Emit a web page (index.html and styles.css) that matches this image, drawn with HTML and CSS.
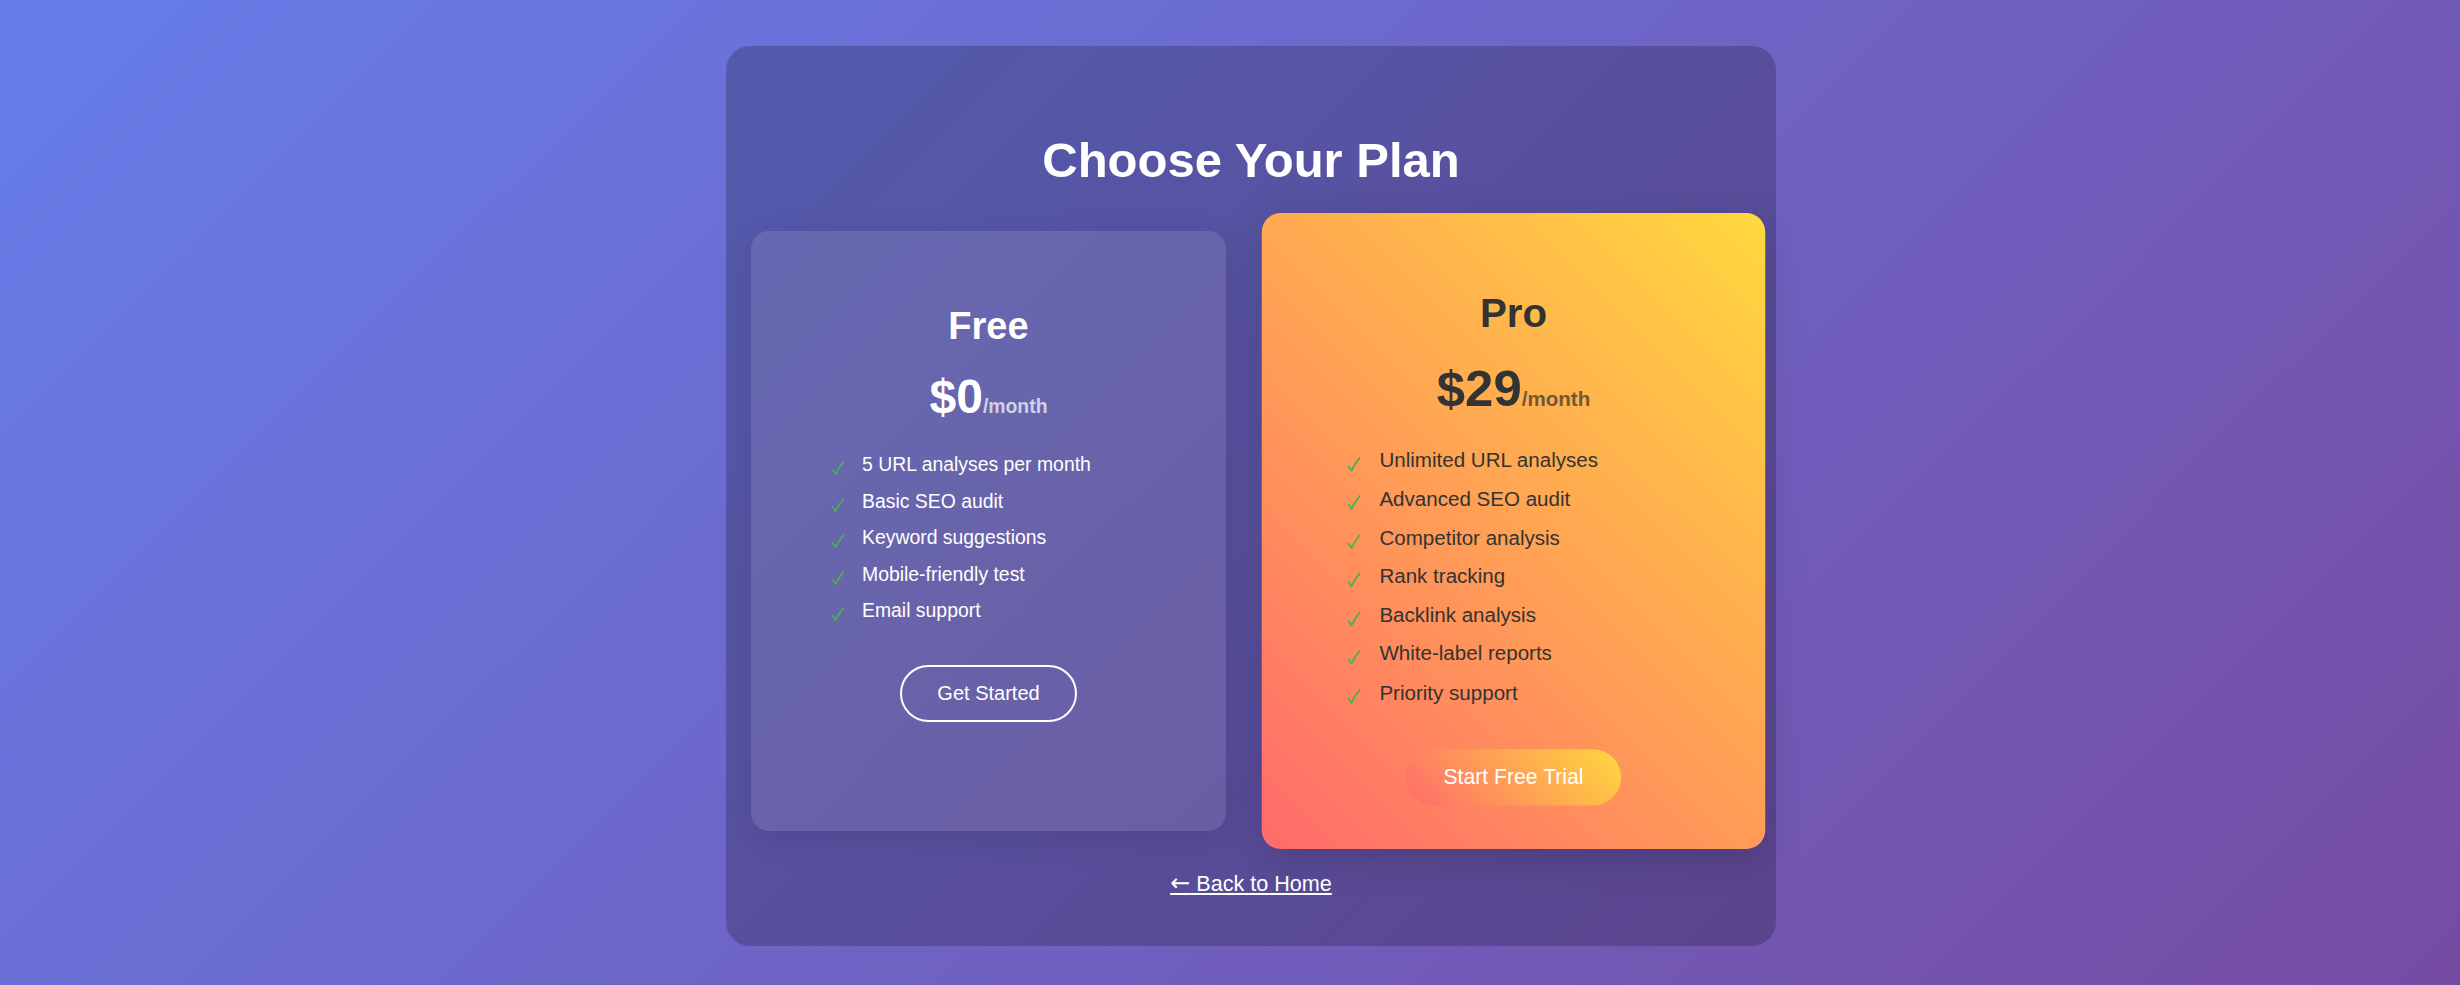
FILE: index.html
```html
<!DOCTYPE html>
<html lang="en">
<head>
<meta charset="utf-8">
<title>Choose Your Plan</title>
<link rel="stylesheet" href="styles.css">
</head>
<body>
  <main class="container">
    <h1 class="title">Choose Your Plan</h1>
    <div class="plans">
      <section class="plan plan-free">
        <h3 class="plan-name">Free</h3>
        <div class="price">$0<span class="period">/month</span></div>
        <ul class="features">
          <li><svg class="check" viewBox="0 0 12 14" aria-hidden="true"><path d="M0.8 9 Q2.4 10.8 3.6 13.2 Q6.8 6.2 11.6 0.8"/></svg>5 URL analyses per month</li>
          <li><svg class="check" viewBox="0 0 12 14" aria-hidden="true"><path d="M0.8 9 Q2.4 10.8 3.6 13.2 Q6.8 6.2 11.6 0.8"/></svg>Basic SEO audit</li>
          <li><svg class="check" viewBox="0 0 12 14" aria-hidden="true"><path d="M0.8 9 Q2.4 10.8 3.6 13.2 Q6.8 6.2 11.6 0.8"/></svg>Keyword suggestions</li>
          <li><svg class="check" viewBox="0 0 12 14" aria-hidden="true"><path d="M0.8 9 Q2.4 10.8 3.6 13.2 Q6.8 6.2 11.6 0.8"/></svg>Mobile-friendly test</li>
          <li><svg class="check" viewBox="0 0 12 14" aria-hidden="true"><path d="M0.8 9 Q2.4 10.8 3.6 13.2 Q6.8 6.2 11.6 0.8"/></svg>Email support</li>
        </ul>
        <a class="btn btn-outline" href="#">Get Started</a>
      </section>
      <section class="plan plan-pro">
        <h3 class="plan-name">Pro</h3>
        <div class="price">$29<span class="period">/month</span></div>
        <ul class="features">
          <li><svg class="check" viewBox="0 0 12 14" aria-hidden="true"><path d="M0.8 9 Q2.4 10.8 3.6 13.2 Q6.8 6.2 11.6 0.8"/></svg>Unlimited URL analyses</li>
          <li><svg class="check" viewBox="0 0 12 14" aria-hidden="true"><path d="M0.8 9 Q2.4 10.8 3.6 13.2 Q6.8 6.2 11.6 0.8"/></svg>Advanced SEO audit</li>
          <li><svg class="check" viewBox="0 0 12 14" aria-hidden="true"><path d="M0.8 9 Q2.4 10.8 3.6 13.2 Q6.8 6.2 11.6 0.8"/></svg>Competitor analysis</li>
          <li><svg class="check" viewBox="0 0 12 14" aria-hidden="true"><path d="M0.8 9 Q2.4 10.8 3.6 13.2 Q6.8 6.2 11.6 0.8"/></svg>Rank tracking</li>
          <li><svg class="check" viewBox="0 0 12 14" aria-hidden="true"><path d="M0.8 9 Q2.4 10.8 3.6 13.2 Q6.8 6.2 11.6 0.8"/></svg>Backlink analysis</li>
          <li><svg class="check" viewBox="0 0 12 14" aria-hidden="true"><path d="M0.8 9 Q2.4 10.8 3.6 13.2 Q6.8 6.2 11.6 0.8"/></svg>White-label reports</li>
          <li><svg class="check" viewBox="0 0 12 14" aria-hidden="true"><path d="M0.8 9 Q2.4 10.8 3.6 13.2 Q6.8 6.2 11.6 0.8"/></svg>Priority support</li>
        </ul>
        <a class="btn btn-gradient" href="#">Start Free Trial</a>
      </section>
    </div>
    <p class="back"><a href="#"><span class="arrow">←</span> Back to Home</a></p>
  </main>
</body>
</html>
```

FILE: styles.css
```css
html, body {
  margin: 0;
  padding: 0;
}

body {
  width: 2460px;
  height: 985px;
  overflow: hidden;
  background: linear-gradient(135deg, #667eea 0%, #764ba2 100%);
  font-family: "Liberation Sans", Arial, sans-serif;
  color: #ffffff;
  padding-top: 46px;
  box-sizing: border-box;
}

.container {
  width: 1050px;
  height: 900px;
  box-sizing: border-box;
  margin-left: calc(50% - 504px);
  padding: 86px 25px 0;
  background: rgba(0, 0, 0, 0.2);
  border-radius: 24px;
  text-align: center;
}

.title {
  margin: 0;
  font-size: 49px;
  font-weight: bold;
  line-height: 1.149;
}

.plans {
  display: grid;
  grid-template-columns: 475px 475px;
  gap: 50px;
  margin-top: 43px;
}

.plan {
  display: flex;
  flex-direction: column;
  align-items: center;
  padding: 40px 40px 41px;
  border-radius: 18px;
  box-sizing: border-box;
  box-shadow: 0 8px 32px rgba(0, 0, 0, 0.1);
}

.plan-free {
  background: rgba(255, 255, 255, 0.1);
}

.plan-pro {
  background: linear-gradient(45deg, #ff6b6b, #ffd93d);
  color: #333333;
  transform: scale(1.06);
  box-shadow: 0 10px 36px rgba(0, 0, 0, 0.15);
}

.plan-name {
  margin: 34px 0 0;
  font-size: 38px;
  font-weight: bold;
  line-height: 1.149;
}

.price {
  margin-top: 20px;
  font-size: 48px;
  font-weight: bold;
  line-height: 1.149;
}

.period {
  font-size: 19.4px;
  opacity: 0.7;
}

.features {
  list-style: none;
  align-self: stretch;
  margin: 22px 0 36px;
  padding: 0 0 0 40px;
  text-align: left;
  font-size: 19.4px;
}

.features li {
  padding: 7.1px 0;
  line-height: 22.3px;
  height: 22.3px;
}

.check {
  width: 12px;
  height: 14px;
  margin: 0 18px 0 1px;
  vertical-align: -4px;
  fill: none;
  stroke: #4caf50;
  stroke-width: 1.7;
  stroke-linecap: round;
  stroke-linejoin: round;
}

.btn {
  display: inline-block;
  padding: 15px 35px;
  border-radius: 50px;
  font-size: 20px;
  line-height: 23px;
  color: #ffffff;
  text-decoration: none;
}

.btn-outline {
  border: 2px solid #ffffff;
  background: transparent;
}

.btn-gradient {
  border: none;
  background: linear-gradient(45deg, #ff6b6b, #ffd93d);
}

.back {
  margin: 40px 0 0;
  font-size: 21.6px;
  line-height: 24.8px;
  height: 24.8px;
}

.back a {
  color: #ffffff;
  text-decoration: underline;
}

.arrow {
  font-family: "DejaVu Sans", sans-serif;
  font-size: 24px;
  line-height: 1;
}
```
